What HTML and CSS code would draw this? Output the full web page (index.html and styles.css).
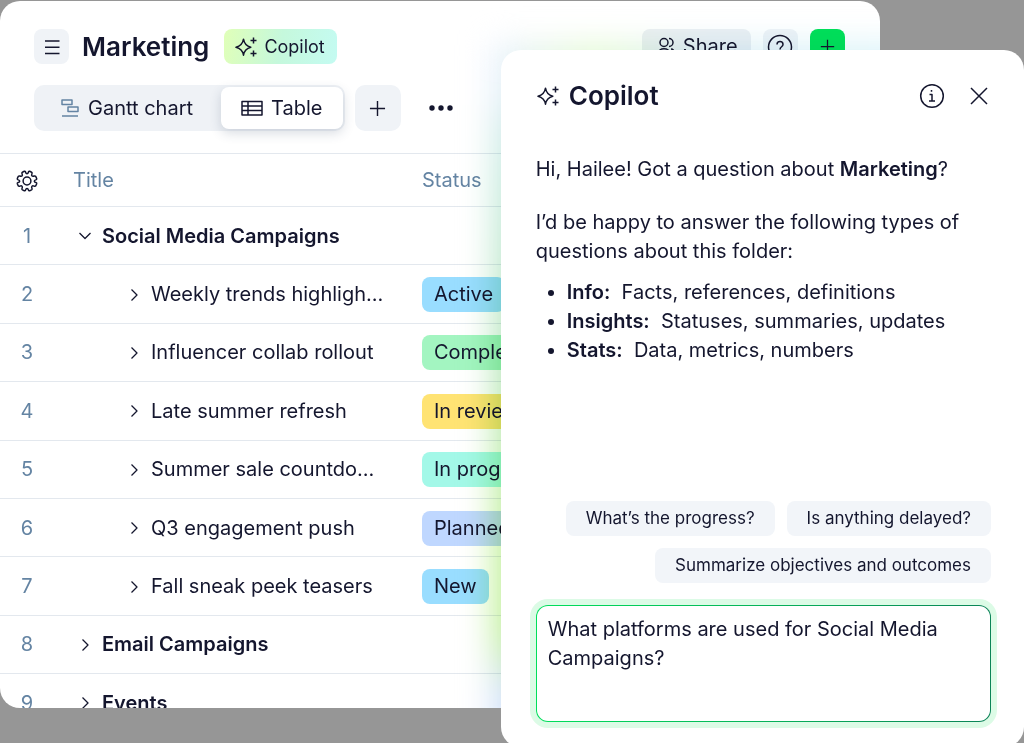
FILE: index.html
```html
<!DOCTYPE html>
<html lang="en">
<head>
<meta charset="utf-8">
<title>Marketing</title>
<link rel="stylesheet" href="styles.css">
</head>
<body>
<svg class="sprite" aria-hidden="true">
  <symbol id="sparkle" viewBox="0 0 24 24"><path d="M9.500 4.200C10.300 9 12.200 11.200 16.800 12.300C12.200 13.400 10.300 15.600 9.500 20.200C8.700 15.600 6.600 13.400 2 12.300C6.600 11.200 8.700 9 9.500 4.200ZM19.500 2.500v6M16.500 5.500h6M19.500 15.500v6M16.500 18.500h6"/></symbol>
  <symbol id="right" viewBox="0 0 14 14"><path d="M4.500 1.500 10 7l-5.500 5.500"/></symbol>
  <symbol id="plus" viewBox="0 0 18 18"><path d="M9 1v16M1 9h16"/></symbol>
</svg>
<main class="window">
  <header class="bar">
    <button class="square" aria-label="Menu"><svg class="icon" width="18" height="18" viewBox="0 0 18 18"><path d="M2 3h14.500M2 9.200h14.500M2 15.500h14.500"/></svg></button>
    <h1 class="heading">Marketing</h1>
    <button class="copilot"><svg class="icon" width="24" height="24"><use href="#sparkle"/></svg>Copilot</button>
    <div class="actions">
      <button class="share"><svg class="icon" width="18" height="20" viewBox="0 0 18 20"><circle cx="7" cy="5.500" r="4"/><path d="M12 1.500a4 4 0 0 1 0 8M1 17c0-7 12-7 12 0zM14 12c2 0 3 2 3 4"/></svg>Share</button>
      <button class="square" aria-label="Help"><svg class="icon" width="26" height="26" viewBox="0 0 26 26"><circle cx="13" cy="13" r="11.500"/><path d="M10 10.500c0-4 6-4 6 0 0 2.500-3 2-3 5M13 17.500v1.500"/></svg></button>
      <button class="square add" aria-label="Add"><svg class="icon" width="15" height="15"><use href="#plus"/></svg></button>
    </div>
  </header>
  <nav class="views">
    <div class="tabs">
      <button class="tab"><svg class="icon muted" width="20" height="20" viewBox="0 0 20 20"><path d="M2 2h10v4.500H2zM8 9h10v4.500H8zM2 18h16"/></svg>Gantt chart</button>
      <button class="tab current"><svg class="icon" width="22" height="18" viewBox="0 0 22 18"><path d="M1 2.500h20v13.500H1zM1 7h20M1 11.500h20M7 2.500v13.500"/></svg>Table</button>
    </div>
    <button class="newview" aria-label="Add view"><svg class="icon" width="17" height="17"><use href="#plus"/></svg></button>
    <button class="more" aria-label="More"><svg width="24" height="6" viewBox="0 0 24 6"><circle cx="3" cy="3" r="2.700"/><circle cx="12" cy="3" r="2.700"/><circle cx="21" cy="3" r="2.700"/></svg></button>
  </nav>
  <table class="tasks">
    <thead><tr>
      <th class="num"><button class="plain" aria-label="Columns"><svg class="icon" width="22" height="22" viewBox="0 0 22 22"><circle cx="11" cy="11" r="3.900"/><path d="M8.300 1.300Q9.300 1 9.600 2.200 10 3.700 11 3.700 12 3.700 12.400 2.200 12.700 1 13.700 1.300L15.600 2.200Q16.500 2.800 15.900 4 15.300 5.300 16 6 16.700 6.600 18 6 19.300 5.700 19.800 6.500L20.700 8.600Q20.900 9.500 19.800 9.900 18.300 10.300 18.300 11.200 18.300 12.100 19.800 12.400 20.900 12.800 20.700 13.700L19.800 15.800Q19.200 16.600 18 16.100 16.700 15.500 16 16.200 15.300 16.900 15.900 18.100 16.500 19.300 15.600 19.900L13.700 20.700Q12.700 21 12.400 19.900 12 18.400 11 18.400 10 18.400 9.600 19.900 9.300 21 8.300 20.700L6.400 19.900Q5.500 19.300 6.100 18.100 6.700 16.900 6 16.200 5.300 15.500 4 16.100 2.800 16.600 2.200 15.800L1.300 13.700Q1.100 12.800 2.200 12.400 3.700 12.100 3.700 11.200 3.700 10.300 2.200 9.900 1.100 9.500 1.300 8.600L2.200 6.500Q2.800 5.700 4 6 5.300 6.600 6 6 6.700 5.300 6.100 4 5.500 2.800 6.400 2.200Z"/></svg></button></th>
      <th class="title">Title</th><th>Status</th>
    </tr></thead>
    <tbody>
      <tr><td class="num">1</td><td><div class="name group"><svg class="icon" width="14" height="14" viewBox="0 0 14 14"><path d="M1.500 4 7 9.500 12.500 4"/></svg>Social Media Campaigns</div></td><td></td></tr>
      <tr><td class="num">2</td><td><div class="name"><svg class="icon" width="14" height="14"><use href="#right"/></svg>Weekly trends highligh...</div></td><td><span class="badge blue">Active</span></td></tr>
      <tr><td class="num">3</td><td><div class="name"><svg class="icon" width="14" height="14"><use href="#right"/></svg>Influencer collab rollout</div></td><td><span class="badge green">Completed</span></td></tr>
      <tr><td class="num">4</td><td><div class="name"><svg class="icon" width="14" height="14"><use href="#right"/></svg>Late summer refresh</div></td><td><span class="badge yellow">In review</span></td></tr>
      <tr><td class="num">5</td><td><div class="name"><svg class="icon" width="14" height="14"><use href="#right"/></svg>Summer sale countdo...</div></td><td><span class="badge teal">In progress</span></td></tr>
      <tr><td class="num">6</td><td><div class="name"><svg class="icon" width="14" height="14"><use href="#right"/></svg>Q3 engagement push</div></td><td><span class="badge indigo">Planned</span></td></tr>
      <tr><td class="num">7</td><td><div class="name"><svg class="icon" width="14" height="14"><use href="#right"/></svg>Fall sneak peek teasers</div></td><td><span class="badge blue">New</span></td></tr>
      <tr><td class="num">8</td><td><div class="name group"><svg class="icon" width="14" height="14"><use href="#right"/></svg>Email Campaigns</div></td><td></td></tr>
      <tr><td class="num">9</td><td><div class="name group"><svg class="icon" width="14" height="14"><use href="#right"/></svg>Events</div></td><td></td></tr>
    </tbody>
  </table>
  <div class="glow"></div>
</main>
<aside class="panel">
  <header class="panelhead">
    <svg class="icon" width="24" height="24"><use href="#sparkle"/></svg>
    <h2 class="heading">Copilot</h2>
    <button class="plain" aria-label="Information"><svg class="icon" width="26" height="26" viewBox="0 0 26 26"><circle cx="13" cy="13" r="11.300"/><path d="M10.500 11.500H13V18M10 18h6M12.500 7v1.800"/></svg></button>
    <button class="plain" aria-label="Close"><svg class="icon" width="20" height="20" viewBox="0 0 20 20"><path d="M2 2l16 16M18 2 2 18"/></svg></button>
  </header>
  <div class="talk">
    <p>Hi, Hailee! Got a question about <b>Marketing</b>?</p>
    <p>I’d be happy to answer the following types of questions about this folder:</p>
    <ul class="topics">
      <li><b>Info:</b>&nbsp; Facts, references, definitions</li>
      <li><b>Insights:</b>&nbsp; Statuses, summaries, updates</li>
      <li><b>Stats:</b>&nbsp; Data, metrics, numbers</li>
    </ul>
  </div>
  <div class="hints">
    <button class="hint">What’s the progress?</button>
    <button class="hint">Is anything delayed?</button>
    <button class="hint">Summarize objectives and outcomes</button>
  </div>
  <textarea class="ask" aria-label="Question">What platforms are used for Social Media Campaigns?</textarea>
</aside>
</body>
</html>
```
FILE: styles.css
```css
* { box-sizing: border-box; }
body {
  margin: 0;
  height: 100vh;
  overflow: hidden;
  position: relative;
  padding: 1px 0 35px;
  background: #969696;
  color: #14162e;
  font-family: Inter, "Liberation Sans", sans-serif;
  font-size: 20px;
  line-height: 29px;
}
button, textarea { font: inherit; color: inherit; }
button { border: 0; padding: 0; background: none; display: flex; align-items: center; justify-content: center; white-space: nowrap; }
b { font-weight: 600; }
.sprite { position: absolute; width: 0; height: 0; }
.icon { flex: none; fill: none; stroke: #14162e; stroke-width: 1.5; stroke-linejoin: round; }
.muted { stroke: #6484a3; }
.heading { margin: 0; font-size: 26px; line-height: 35px; font-weight: 600; }

.window { position: relative; width: 85.9%; height: 100%; overflow: hidden; background: #fff; border-radius: 20px; }
.bar { display: flex; align-items: center; padding: 28px 35px 0 34px; }
.square { width: 35px; height: 35px; border-radius: 8px; background: #f0f3f7; }
.bar .heading { margin: 0 15px 0 13px; }
.copilot { height: 35px; padding: 0 12px 0 10px; gap: 6px; border-radius: 8px; font-size: 18px; background: linear-gradient(100deg, #e0ffb8, #c5f8dc 50%, #c4fbf2); }
.actions { display: flex; gap: 12px; margin-left: auto; }
.share { height: 35px; padding: 0 13px 0 15px; gap: 8px; border-radius: 8px; background: #edf0f4; }
.add { background: #00e05a; }

.views { display: flex; align-items: center; padding: 21px 35px 22px 34px; }
.tabs { display: flex; padding: 2px; border-radius: 10px; background: #eff2f6; }
.tab { height: 42px; padding: 0 28px 0 24px; gap: 8px; border-radius: 8px; }
.current { padding: 0 20px; background: #fff; box-shadow: 0 4px 12px #28406030; }
.newview { width: 46px; height: 46px; margin-left: 10px; border-radius: 10px; background: #f0f3f7; }
.more { width: 46px; height: 46px; margin-left: 17px; fill: #14162e; }

.tasks { width: 100%; height: 78vh; border-collapse: collapse; table-layout: fixed; border-top: 1px solid #e3e8ee; }
.tasks th, .tasks td { height: 58px; padding: 1px 0 0; text-align: left; border-bottom: 1px solid #e3e8ee; white-space: nowrap; }
.tasks th { height: 53px; font-weight: 400; color: #6484a3; }
.tasks .num { width: 73px; padding-left: 16px; color: #6484a3; }
.tasks td.num { padding: 1px 19px 0 0; text-align: center; }
.tasks .title { width: 349px; }
.name { display: flex; align-items: center; gap: 10px; padding-left: 54px; }
.name .icon { stroke-width: 1.3; }
.group { padding-left: 5px; font-weight: 600; }
.badge { display: inline-block; padding: 3px 12px; border-radius: 8px; vertical-align: middle; }
.blue { background: #99ddff; }
.green { background: #a3f5c1; }
.yellow { background: #ffe373; }
.teal { background: #a3f8e8; }
.indigo { background: #bfd7ff; }
.glow {
  position: absolute;
  left: 56%;
  right: -80px;
  top: 44px;
  bottom: -35px;
  filter: blur(16px);
  mix-blend-mode: multiply;
  background:
    linear-gradient(90deg, #e6efff, #e2fad0 22%, #d8eef4 45%, #d8f5fb) 0 0 / 100% 60px no-repeat,
    linear-gradient(#e6edff, #c8ebe0 18%, #b8e6bc 45%, #c2f09c 70%, #c2f09c 84%, #d0e0fa 93%);
}

.panel { position: absolute; left: 48.9%; right: 0; top: 50px; bottom: -4px; display: flex; flex-direction: column; padding: 28px 33px 25px 35px; background: #fff; border-radius: 20px; }
.panelhead { display: flex; align-items: center; }
.panelhead .heading { margin: 0 auto 0 9px; }
.panelhead .plain + .plain { margin-left: 24px; }
.panelhead .plain:last-child { margin-right: 2px; }
.talk { margin-top: 42px; }
.talk p { margin: 0 0 24px; }
.talk .topics { margin: -12px 0 0; padding-left: 31px; }
.hints { display: flex; flex-wrap: wrap; justify-content: flex-end; gap: 12px; margin-top: auto; }
.hint { height: 35px; padding: 0 20px; border-radius: 8px; background: #f2f5f9; font-size: 17px; }
.ask {
  display: block;
  flex: none;
  width: 100%;
  height: 117px;
  margin-top: 22px;
  padding: 9px 11px;
  resize: none;
  outline: none;
  border: 1px solid transparent;
  border-radius: 12px;
  background: linear-gradient(#fff, #fff) padding-box, linear-gradient(90deg, #00e05a, #0b8457) border-box;
  box-shadow: 0 0 0 6px #dcfbe6;
}
```
